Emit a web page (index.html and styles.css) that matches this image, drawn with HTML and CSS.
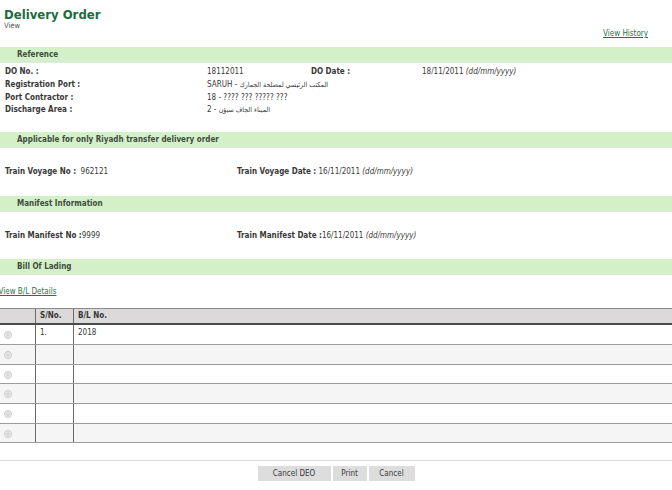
FILE: index.html
```html
<!DOCTYPE html>
<html>
<head>
<meta charset="utf-8">
<link rel="stylesheet" href="styles.css">
</head>
<body>
<div class="page">
  <header class="top">
    <h1 class="title">Delivery Order</h1>
    <div class="sub">View</div>
    <div class="hist"><a href="#">View History</a></div>
  </header>

  <section class="sec sec-ref">
    <div class="band">Reference</div>
    <div class="ref-grid">
      <span class="lbl">DO No. :</span><span class="val">18112011</span><span class="lbl">DO Date :</span><span class="val">18/11/2011 <i>(dd/mm/yyyy)</i></span>
      <span class="lbl">Registration Port :</span><span class="val span3">SARUH - <span class="ar">المكتب الرئيسي لمصلحة الجمارك</span></span>
      <span class="lbl">Port Contractor :</span><span class="val span3">18 - ???? ??? ????? ???</span>
      <span class="lbl">Discharge Area :</span><span class="val span3">2 - <span class="ar">الميناء الجاف سيؤن</span></span>
    </div>
  </section>

  <section class="sec sec-riy">
    <div class="band">Applicable for only Riyadh transfer delivery order</div>
    <div class="pair-row">
      <span class="cell"><b class="lbl">Train Voyage No :</b>&nbsp; 962121</span>
      <span class="cell"><b class="lbl">Train Voyage Date :</b> 16/11/2011 <i>(dd/mm/yyyy)</i></span>
    </div>
  </section>

  <section class="sec sec-man">
    <div class="band">Manifest Information</div>
    <div class="pair-row">
      <span class="cell"><b class="lbl">Train Manifest No :</b>9999</span>
      <span class="cell"><b class="lbl">Train Manifest Date :</b>16/11/2011 <i>(dd/mm/yyyy)</i></span>
    </div>
  </section>

  <section class="sec sec-bl">
    <div class="band">Bill Of Lading</div>
    <div class="bl-link"><a href="#">View B/L Details</a></div>
    <div class="grid">
      <div class="g-row g-head"><span class="c c0"></span><span class="c c1">S/No.</span><span class="c c2">B/L No.</span></div>
      <div class="g-row"><span class="c c0"><span class="radio"></span></span><span class="c c1">1.</span><span class="c c2">2018</span></div>
      <div class="g-row alt"><span class="c c0"><span class="radio"></span></span><span class="c c1"></span><span class="c c2"></span></div>
      <div class="g-row"><span class="c c0"><span class="radio"></span></span><span class="c c1"></span><span class="c c2"></span></div>
      <div class="g-row alt"><span class="c c0"><span class="radio"></span></span><span class="c c1"></span><span class="c c2"></span></div>
      <div class="g-row"><span class="c c0"><span class="radio"></span></span><span class="c c1"></span><span class="c c2"></span></div>
      <div class="g-row alt"><span class="c c0"><span class="radio"></span></span><span class="c c1"></span><span class="c c2"></span></div>
    </div>
  </section>

  <div class="rule"></div>
  <div class="actions">
    <button class="btn btn-deo">Cancel DEO</button>
    <button class="btn btn-print">Print</button>
    <button class="btn btn-cancel">Cancel</button>
  </div>
</div>
</body>
</html>
```
FILE: styles.css
```css
html, body {
  margin: 0;
  padding: 0;
  background: #ffffff;
}
body {
  font-family: "DejaVu Sans Condensed", "DejaVu Sans", sans-serif;
  font-stretch: condensed;
  font-size: 8px;
  color: #383838;
}
.page {
  width: 672px;
}
.top {
  height: 47px;
  padding-left: 4px;
  box-sizing: border-box;
}
.title {
  margin: 0;
  padding-top: 7px;
  font-size: 13px;
  line-height: 15px;
  font-weight: bold;
  color: #1b6c3c;
}
.sub {
  font-size: 7.5px;
  line-height: 8px;
  color: #555;
}
.hist {
  margin-top: -1px;
  line-height: 9px;
  text-align: right;
  padding-right: 24px;
}
a {
  color: #2b7048;
  text-decoration: underline;
}
.band {
  height: 15px;
  line-height: 15px;
  background: #d3f0c8;
  border-bottom: 1px solid #e4e6e2;
  padding-left: 17px;
  font-weight: bold;
  color: #3e4d3e;
}
.ref-grid {
  margin-top: 2px;
  display: grid;
  grid-template-columns: 202px 104px 111px 1fr;
  grid-auto-rows: 12.8px;
  line-height: 13px;
  padding-left: 5px;
}
.ref-grid .lbl { font-weight: bold; color: #383838; }
.ref-grid .span3 { grid-column: span 3; }
.ar {
  font-size: 7px;
}
.sec-riy { margin-top: 16px; }
.sec-man { margin-top: 18px; }
.sec-bl { margin-top: 17px; }
.pair-row {
  margin-top: 17px;
  display: grid;
  grid-template-columns: 232px 1fr;
  padding-left: 5px;
  line-height: 13px;
  height: 13px;
}
.pair-row .lbl { color: #383838; }
.bl-link {
  margin-top: 10px;
  margin-left: -1.5px;
  line-height: 13px;
  height: 13px;
}
.grid {
  margin-top: 10px;
  border-top: 1px solid #8a8a8a;
}
.g-row {
  display: grid;
  grid-template-columns: 36px 38px 1fr;
  height: 19.7px;
  box-sizing: border-box;
  border-bottom: 1px solid #9c9c9c;
  background: #ffffff;
}
.g-row.alt { background: #f5f5f5; }
.g-head {
  height: 16px;
  background: #dbd9d9;
  border-bottom: 2px solid #4a4a4a;
  font-weight: bold;
}
.c {
  display: block;
  padding-left: 4px;
  line-height: 16px;
  box-sizing: border-box;
}
.g-head .c { line-height: 14px; }
.c0 { border-right: 1px solid #6a6a6a; padding-left: 0; }
.c1 { border-right: 1px solid #6a6a6a; }
.radio {
  display: block;
  margin: 6px 0 0 3.5px;
  width: 8px;
  height: 8px;
  box-sizing: border-box;
  border-radius: 50%;
  border: 1px solid #c9c9c9;
  background: radial-gradient(circle, #d8d8d8 0 1.5px, #ececec 2px);
}
.rule {
  margin-top: 17px;
  height: 1px;
  background: #dcdcdc;
}
.actions {
  margin-top: 5px;
  display: flex;
  justify-content: center;
  gap: 2px;
}
.btn {
  font-family: inherit;
  font-stretch: condensed;
  font-size: 8px;
  color: #3a3a3a;
  height: 15px;
  line-height: 15px;
  padding: 0;
  border: 0;
  background: #dddddd;
  border-radius: 0;
}
.btn-deo { width: 73px; }
.btn-print { width: 34px; }
.btn-cancel { width: 46px; }
```
